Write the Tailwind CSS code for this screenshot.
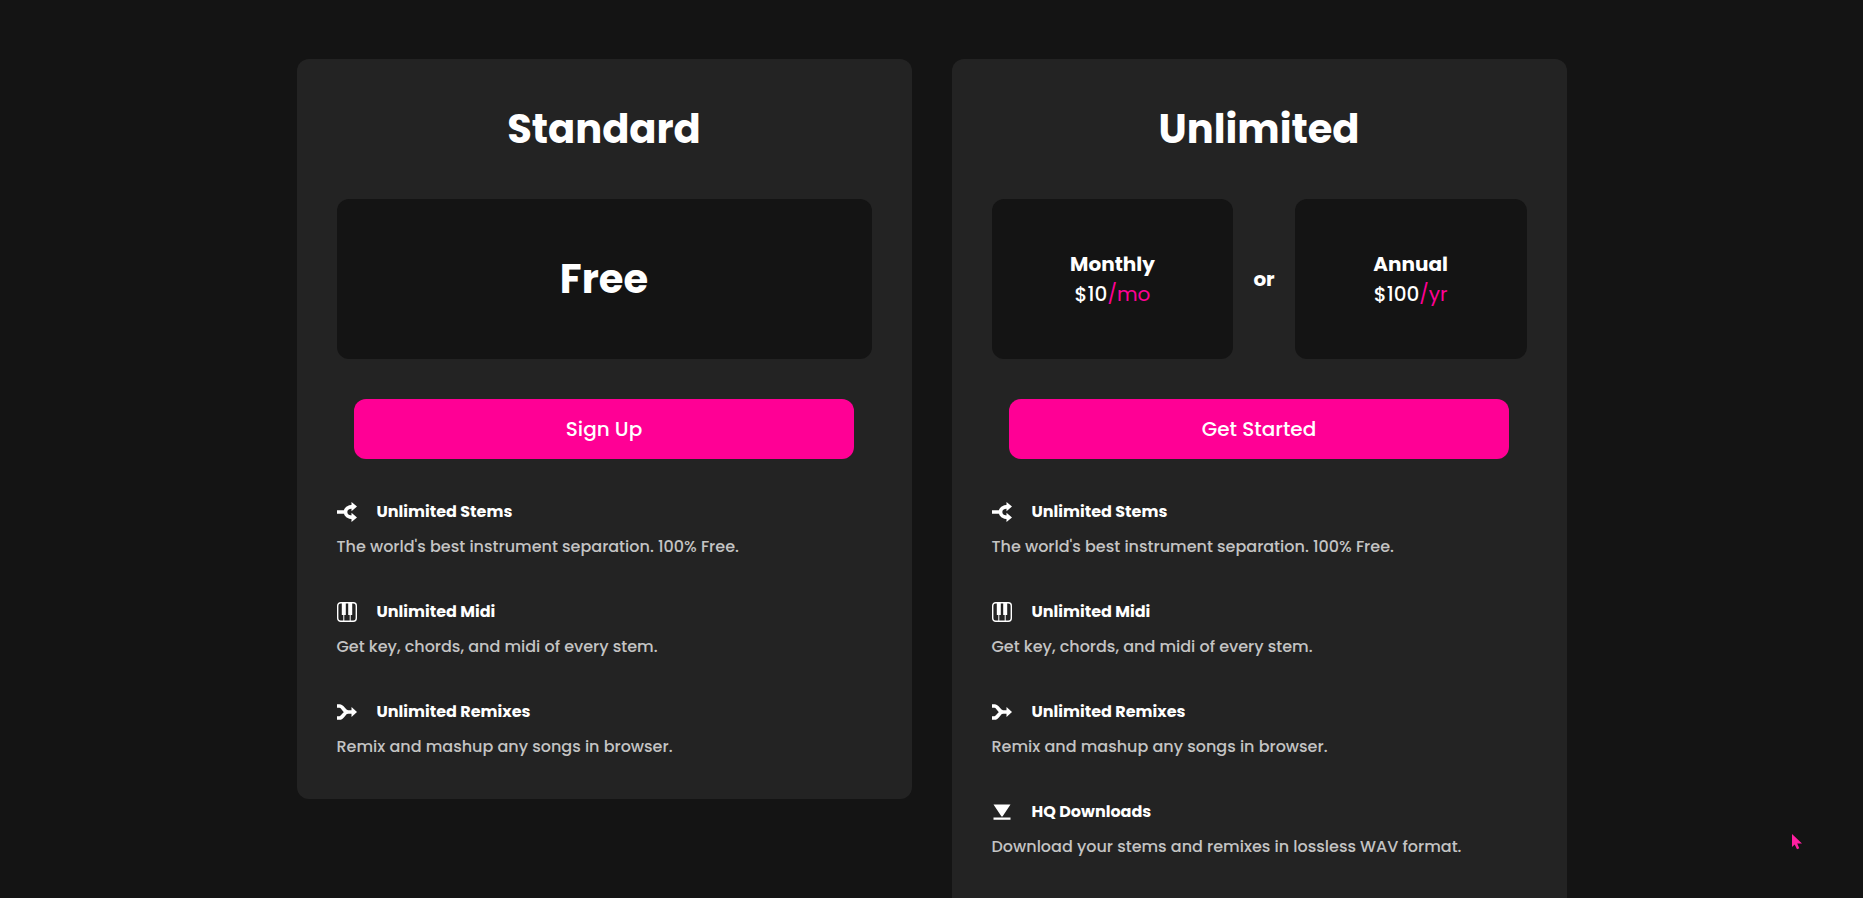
<!DOCTYPE html>
<html lang="en">

<head>
  <meta charset="UTF-8" />
  <meta name="viewport" content="width=device-width, initial-scale=1.0" />
  <title>Pricing</title>
  <script src="https://cdn.jsdelivr.net/npm/@tailwindcss/browser@4"></script>
</head>

<body class="bg-[#141414] text-white font-['Poppins','Inter',sans-serif] font-medium">
  <!-- Icons shared by both plans -->
  <svg class="hidden" aria-hidden="true">
    <symbol id="icon-split" viewBox="0 0 20 20">
      <path d="M0 10H8M16 4.600C11 4.600 8.500 7 8.500 10s2.500 5.400 7.500 5.400" fill="none" stroke="currentColor" stroke-width="3.600" />
      <path d="M14.500 0l5.500 4.600-5.500 4.600zM14.500 10.800l5.500 4.600-5.500 4.600z" fill="currentColor" />
    </symbol>
    <symbol id="icon-piano" viewBox="0 0 20 20">
      <rect x=".7" y=".7" width="18.600" height="18.600" rx="3" fill="none" stroke="currentColor" stroke-width="1.400" />
      <path d="M4.800 1h4v12h-4zM11.200 1h4v12h-4z" fill="currentColor" />
      <path d="M6.800 12v7.500M13.200 12v7.500" stroke="currentColor" stroke-width="1" />
    </symbol>
    <symbol id="icon-merge" viewBox="0 0 20 20">
      <path d="M0 4h2.500C6.500 4 6.500 10 11 10H16M0 16h2.500C6.500 16 6.500 10 11 10" fill="none" stroke="currentColor" stroke-width="3.600" />
      <path d="M14.500 5l5.500 5-5.500 5z" fill="currentColor" />
    </symbol>
    <symbol id="icon-download" viewBox="0 0 20 20">
      <path d="M1.500 2.500h17l-8 12h-1zM1.500 15.500h17v2.300h-17z" fill="currentColor" />
    </symbol>
  </svg>

  <main class="mx-auto grid max-w-[1270px] grid-cols-2 items-start gap-10 pt-[59px]">
    <!-- Standard -->
    <section class="rounded-xl bg-[#232323] p-10">
      <h2 class="text-center text-[40px] leading-[60px] font-bold">Standard</h2>
      <div class="mt-10 flex h-40 items-center justify-center rounded-xl bg-[#141414]">
        <p class="text-[40px] leading-[60px] font-bold">Free</p>
      </div>
      <button type="button" class="mx-auto mt-10 block h-[60px] w-full max-w-[500px] rounded-xl bg-[#ff0095] text-xl">Sign Up</button>
      <ul class="mt-10 flex flex-col gap-10">
        <li>
          <h3 class="flex items-center gap-5 leading-[26px] font-bold"><svg class="size-5"><use href="#icon-split" /></svg>Unlimited Stems</h3>
          <p class="mt-2.5 text-[#c4c4c4]">The world's best instrument separation. 100% Free.</p>
        </li>
        <li>
          <h3 class="flex items-center gap-5 leading-[26px] font-bold"><svg class="size-5"><use href="#icon-piano" /></svg>Unlimited Midi</h3>
          <p class="mt-2.5 text-[#c4c4c4]">Get key, chords, and midi of every stem.</p>
        </li>
        <li>
          <h3 class="flex items-center gap-5 leading-[26px] font-bold"><svg class="size-5"><use href="#icon-merge" /></svg>Unlimited Remixes</h3>
          <p class="mt-2.5 text-[#c4c4c4]">Remix and mashup any songs in browser.</p>
        </li>
      </ul>
    </section>

    <!-- Unlimited -->
    <section class="rounded-xl bg-[#232323] px-10 pt-10 pb-20">
      <h2 class="text-center text-[40px] leading-[60px] font-bold">Unlimited</h2>
      <div class="mt-10 flex h-40 items-center gap-5 text-xl leading-[30px]">
        <div class="flex h-full flex-auto flex-col items-center justify-center rounded-xl bg-[#141414]">
          <p class="font-bold">Monthly</p>
          <p>$10<span class="font-normal text-[#ff0095]">/mo</span></p>
        </div>
        <p class="font-bold">or</p>
        <div class="flex h-full flex-auto flex-col items-center justify-center rounded-xl bg-[#141414]">
          <p class="font-bold">Annual</p>
          <p>$100<span class="font-normal text-[#ff0095]">/yr</span></p>
        </div>
      </div>
      <button type="button" class="mx-auto mt-10 block h-[60px] w-full max-w-[500px] rounded-xl bg-[#ff0095] text-xl">Get Started</button>
      <ul class="mt-10 flex flex-col gap-10">
        <li>
          <h3 class="flex items-center gap-5 leading-[26px] font-bold"><svg class="size-5"><use href="#icon-split" /></svg>Unlimited Stems</h3>
          <p class="mt-2.5 text-[#c4c4c4]">The world's best instrument separation. 100% Free.</p>
        </li>
        <li>
          <h3 class="flex items-center gap-5 leading-[26px] font-bold"><svg class="size-5"><use href="#icon-piano" /></svg>Unlimited Midi</h3>
          <p class="mt-2.5 text-[#c4c4c4]">Get key, chords, and midi of every stem.</p>
        </li>
        <li>
          <h3 class="flex items-center gap-5 leading-[26px] font-bold"><svg class="size-5"><use href="#icon-merge" /></svg>Unlimited Remixes</h3>
          <p class="mt-2.5 text-[#c4c4c4]">Remix and mashup any songs in browser.</p>
        </li>
        <li>
          <h3 class="flex items-center gap-5 leading-[26px] font-bold"><svg class="size-5"><use href="#icon-download" /></svg>HQ Downloads</h3>
          <p class="mt-2.5 text-[#c4c4c4]">Download your stems and remixes in lossless WAV format.</p>
        </li>
      </ul>
    </section>
  </main>

  <!-- Pointer -->
  <svg class="pointer-events-none fixed right-[61px] bottom-12 h-4 w-2.5 text-[#ff1fa0]" viewBox="0 0 10 16" aria-hidden="true">
    <path d="M0 0v13l2.700-2.500L5 15.300l2.300-1L5.200 9.600H10z" fill="currentColor" />
  </svg>
</body>

</html>
